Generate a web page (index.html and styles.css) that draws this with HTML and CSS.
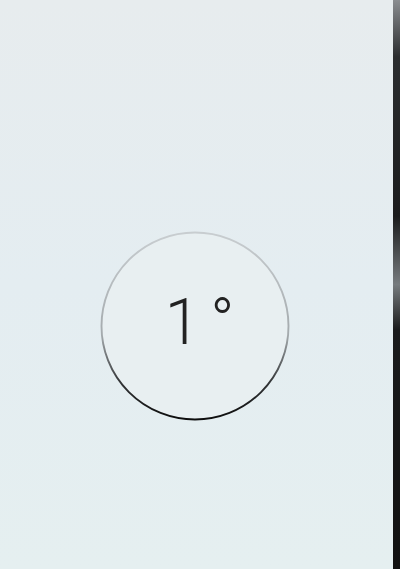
FILE: index.html
```html
<!DOCTYPE html>
<html lang="en">
<head>
  <meta charset="UTF-8" />
  <meta name="viewport" content="width=device-width, initial-scale=1" />
  <title>Level</title>
  <link rel="stylesheet" href="styles.css">
</head>
<body>
  <div class="screen">
    <div class="level">
      <svg class="ring" width="190" height="190" viewBox="0 0 190 190">
        <defs>
          <linearGradient id="edge" x1="0" y1="0" x2="0" y2="1">
            <stop offset="0" stop-color="#c8cdd0"/>
            <stop offset="0.55" stop-color="#a4aaad"/>
            <stop offset="0.8" stop-color="#333537"/>
            <stop offset="1" stop-color="#0d0d0d"/>
          </linearGradient>
        </defs>
        <circle cx="95" cy="95" r="93.5" fill="#e8eff1" stroke="url(#edge)" stroke-width="1.9"/>
      </svg>
      <div class="angle">1<span class="deg">°</span></div>
    </div>
  </div>
  <div class="bezel"></div>
</body>
</html>
```

FILE: styles.css
```css
body {
  margin: 0;
  height: 569px;
  display: flex;
  background: #e5ecef;
  font-family: Roboto, "Noto Sans", sans-serif;
  overflow: hidden;
}
.screen {
  flex: 1;
  display: flex;
  justify-content: center;
  padding: 231px 4px 0 0;
  background: linear-gradient(180deg, #e7ecee 0%, #e4edf1 50%, #e5eff0 100%);
}
.level {
  position: relative;
  width: 190px;
  height: 190px;
}
.ring {
  display: block;
}
.angle {
  position: absolute;
  top: 0;
  left: 0;
  right: 0;
  bottom: 0;
  display: flex;
  align-items: center;
  justify-content: center;
  padding: 0 0 8px 10px;
  font-size: 64px;
  font-weight: 300;
  color: #222;
}
.deg {
  margin-left: 10px;
}
.bezel {
  width: 7px;
  background: linear-gradient(180deg, #8a8d90 0%, #2b2d2f 10%, #1b1c1d 38%, #767b7e 50%, #1a1b1c 58%, #111 100%);
}
```
